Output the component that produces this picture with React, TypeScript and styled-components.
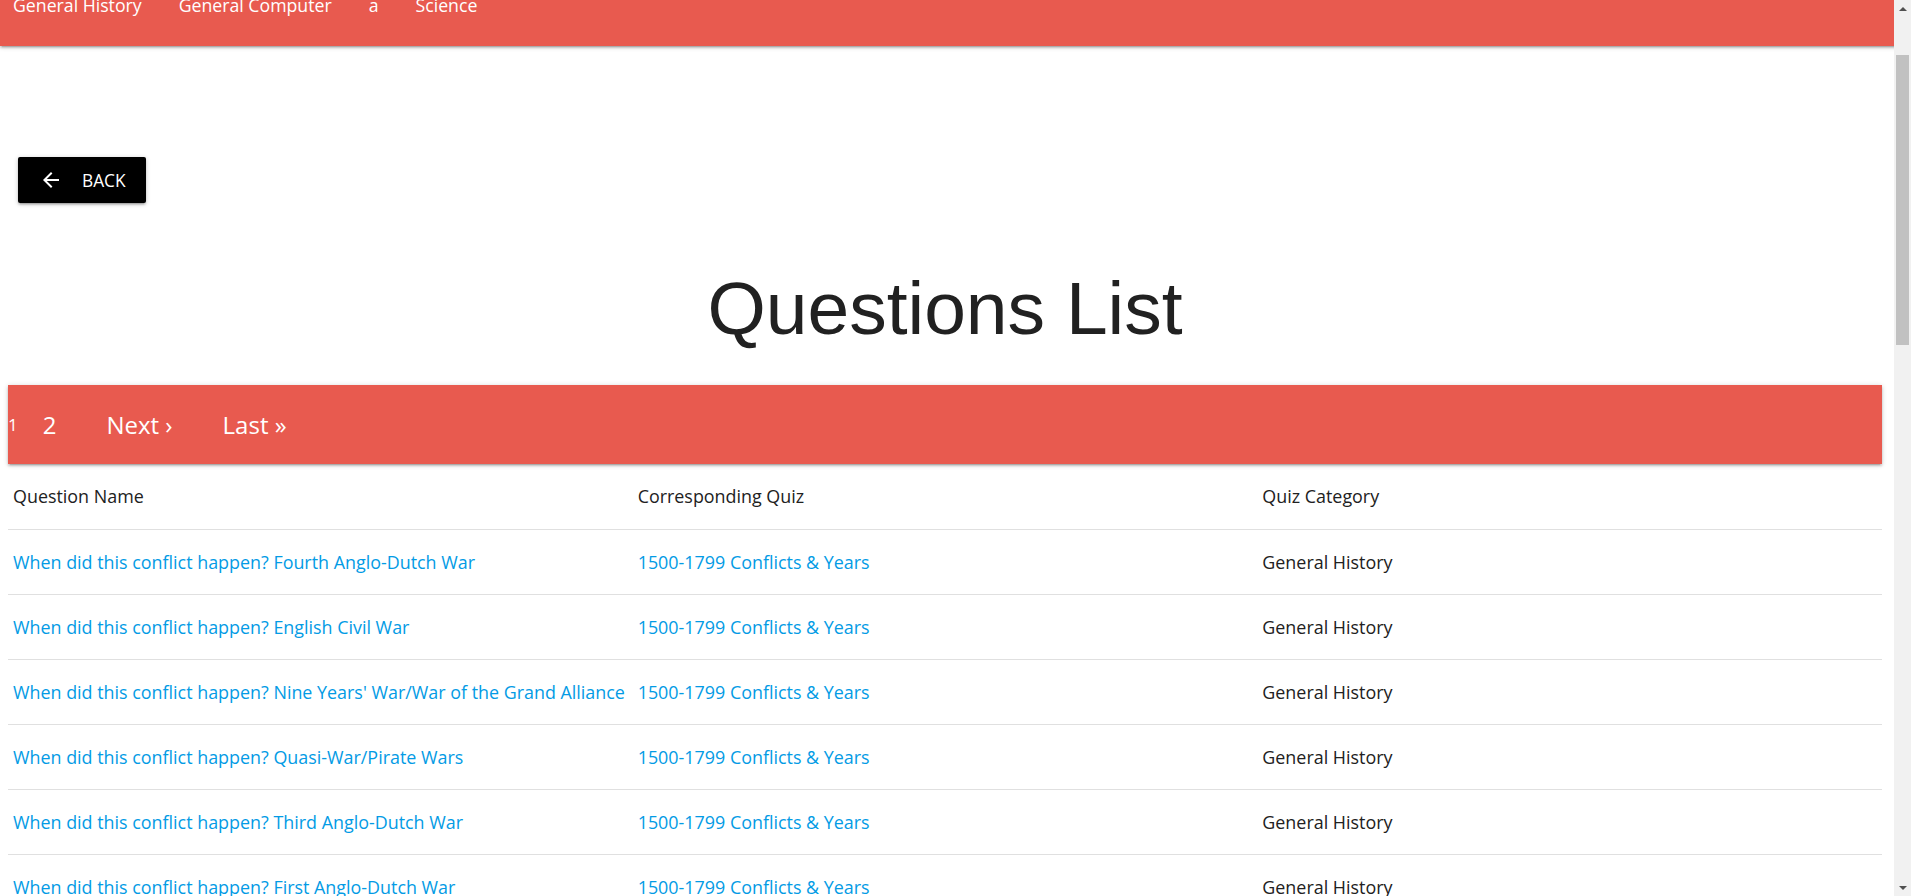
import React from 'react';
import styled, { createGlobalStyle } from 'styled-components';

const GlobalStyle = createGlobalStyle`
  html, body { margin: 0; padding: 0; background: #ffffff; }
  body {
    font-family: "Open Sans", "Noto Sans", sans-serif;
    color: rgba(0, 0, 0, 0.87);
  }
  * { box-sizing: border-box; }
`;

const shadow =
  '0 2px 2px 0 rgba(0,0,0,.14), 0 3px 1px -2px rgba(0,0,0,.12), 0 1px 5px 0 rgba(0,0,0,.2)';

const Nav = styled.nav`
  height: 46px;
  background: #e85a4f;
  overflow: hidden;
  box-shadow: ${shadow};
  position: relative;
  z-index: 1;
`;

const NavList = styled.ul`
  display: flex;
  gap: 37px;
  margin: -3px 0 0;
  padding: 0 0 0 13px;
  list-style: none;
  font-size: 17.7px;
  line-height: 17px;
  color: #ffffff;
`;

const NavItem = styled.li`
  white-space: nowrap;
`;

const Main = styled.main`
  padding: 0 29px 40px 8px;
`;

const BackRow = styled.div`
  padding: 111px 0 0 10px;
`;

const BackButton = styled.button`
  display: inline-flex;
  align-items: center;
  gap: 19px;
  height: 46px;
  padding: 0 20px 0 21px;
  border: none;
  border-radius: 2px;
  background: #000000;
  color: #ffffff;
  font-family: "Open Sans", "Noto Sans", sans-serif;
  font-size: 17.3px;
  text-transform: uppercase;
  box-shadow: ${shadow};
  cursor: pointer;
`;

const Title = styled.h1`
  margin: 64px 0 35px;
  font-family: "Liberation Sans", Arial, sans-serif;
  font-weight: 400;
  font-size: 75px;
  line-height: 1.1;
  text-align: center;
  color: #212121;
`;

const Pagination = styled.ul`
  display: flex;
  align-items: center;
  height: 79px;
  margin: 0;
  padding: 0;
  list-style: none;
  background: #e85a4f;
  box-shadow: ${shadow};
  color: #ffffff;
`;

const PageItem = styled.li<{ $active?: boolean }>`
  padding: ${(p) => (p.$active ? '0 0 0 0' : '0 25px')};
  font-size: ${(p) => (p.$active ? '17px' : '24px')};
  white-space: nowrap;
  cursor: pointer;
`;

const Table = styled.table`
  width: 100%;
  table-layout: fixed;
  border-collapse: collapse;
  font-size: 17.9px;
`;

const HeadCell = styled.th`
  height: 66px;
  padding: 0 5px;
  text-align: left;
  font-weight: 400;
  color: #212121;
  border-bottom: 1px solid rgba(0, 0, 0, 0.12);
`;

const Cell = styled.td<{ $link?: boolean }>`
  height: 65px;
  padding: 0 5px;
  white-space: nowrap;
  color: ${(p) => (p.$link ? '#039be5' : '#212121')};
  border-bottom: 1px solid rgba(0, 0, 0, 0.12);
`;

const ScrollTrack = styled.div`
  position: fixed;
  top: 0;
  right: 0;
  bottom: 0;
  width: 17px;
  background: #f1f1f1;
  display: flex;
  flex-direction: column;
  align-items: center;
  z-index: 5;
`;

const ScrollArrow = styled.div<{ $down?: boolean }>`
  height: 17px;
  width: 17px;
  display: flex;
  align-items: center;
  justify-content: center;
  &::before {
    content: '';
    border-left: 4px solid transparent;
    border-right: 4px solid transparent;
    ${(p) => (p.$down ? 'border-top: 4px solid #505050;' : 'border-bottom: 4px solid #505050;')}
  }
`;

const ScrollSpace = styled.div`
  flex: 1;
  width: 100%;
  padding: 38px 2px 0;
`;

const ScrollThumb = styled.div`
  height: 290px;
  background: #c1c1c1;
`;

const rows = [
  'Fourth Anglo-Dutch War',
  'English Civil War',
  "Nine Years' War/War of the Grand Alliance",
  'Quasi-War/Pirate Wars',
  'Third Anglo-Dutch War',
  'First Anglo-Dutch War',
  'Second Anglo-Dutch War',
  "Seven Years' War",
  'War of the Spanish Succession',
  "Thirty Years' War",
];

const ArrowBack = () => (
  <svg width="24" height="24" viewBox="0 0 24 24" fill="#ffffff" aria-hidden="true">
    <path d="M20 11H7.83l5.59-5.59L12 4l-8 8 8 8 1.41-1.41L7.83 13H20v-2z" />
  </svg>
);

export default function App() {
  return (
    <>
      <GlobalStyle />
      <Nav>
        <NavList>
          <NavItem>General History</NavItem>
          <NavItem>General Computer</NavItem>
          <NavItem>a</NavItem>
          <NavItem>Science</NavItem>
        </NavList>
      </Nav>
      <Main>
        <BackRow>
          <BackButton>
            <ArrowBack />
            Back
          </BackButton>
        </BackRow>
        <Title>Questions List</Title>
        <Pagination>
          <PageItem $active>1</PageItem>
          <PageItem>2</PageItem>
          <PageItem>Next ›</PageItem>
          <PageItem>Last »</PageItem>
        </Pagination>
        <Table>
          <thead>
            <tr>
              <HeadCell>Question Name</HeadCell>
              <HeadCell>Corresponding Quiz</HeadCell>
              <HeadCell>Quiz Category</HeadCell>
            </tr>
          </thead>
          <tbody>
            {rows.map((r) => (
              <tr key={r}>
                <Cell $link>When did this conflict happen? {r}</Cell>
                <Cell $link>1500-1799 Conflicts &amp; Years</Cell>
                <Cell>General History</Cell>
              </tr>
            ))}
          </tbody>
        </Table>
      </Main>
      <ScrollTrack aria-hidden="true">
        <ScrollArrow />
        <ScrollSpace>
          <ScrollThumb />
        </ScrollSpace>
        <ScrollArrow $down />
      </ScrollTrack>
    </>
  );
}
